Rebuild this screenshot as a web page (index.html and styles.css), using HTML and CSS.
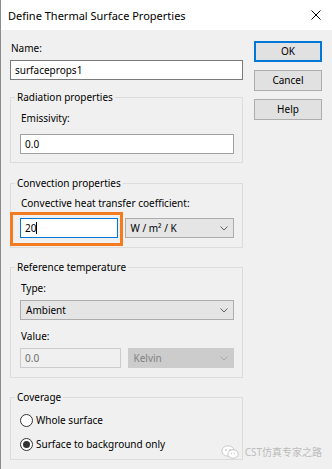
FILE: index.html
```html
<!DOCTYPE html>
<html lang="en">
<head>
    <meta charset="UTF-8">
    <meta name="viewport" content="width=device-width, initial-scale=1.0">
    <title>Define Thermal Surface Properties</title>
    <link rel="stylesheet" href="styles.css">
</head>
<body>

<div class="window">
    <div class="titlebar">
        <span class="title">Define Thermal Surface Properties</span>
        <svg class="close" width="10" height="10" viewBox="0 0 10 10">
            <path d="M0.5 0.5 L9.5 9.5 M9.5 0.5 L0.5 9.5" stroke="#000" stroke-width="1" fill="none"/>
        </svg>
    </div>

    <div class="content">
        <div class="main">
            <div class="label name-label">Name:</div>
            <div class="field field-dark">surfaceprops1</div>

            <fieldset class="group group-radiation">
                <legend>Radiation properties</legend>
                <div class="label">Emissivity:</div>
                <div class="field field-gap">0.0</div>
            </fieldset>

            <fieldset class="group group-convection">
                <legend>Convection properties</legend>
                <div class="label">Convective heat transfer coefficient:</div>
                <div class="row row-convection">
                    <div class="highlight">
                        <div class="field field-focus">20<span class="caret"></span></div>
                    </div>
                    <div class="select">
                        <span>W / m² / K</span>
                        <svg width="8" height="5" viewBox="0 0 8 5"><path d="M0.5 0.5 L4 4 L7.5 0.5" stroke="#606060" fill="none"/></svg>
                    </div>
                </div>
            </fieldset>

            <fieldset class="group group-reference">
                <legend>Reference temperature</legend>
                <div class="label">Type:</div>
                <div class="select select-wide">
                    <span>Ambient</span>
                    <svg width="8" height="5" viewBox="0 0 8 5"><path d="M0.5 0.5 L4 4 L7.5 0.5" stroke="#606060" fill="none"/></svg>
                </div>
                <div class="label value-label">Value:</div>
                <div class="row row-value">
                    <div class="field field-disabled">0.0</div>
                    <div class="select select-disabled">
                        <span>Kelvin</span>
                        <svg width="8" height="5" viewBox="0 0 8 5"><path d="M0.5 0.5 L4 4 L7.5 0.5" stroke="#a8a8a8" fill="none"/></svg>
                    </div>
                </div>
            </fieldset>

            <fieldset class="group group-coverage">
                <legend>Coverage</legend>
                <div class="radio-row">
                    <span class="radio"></span>
                    <span>Whole surface</span>
                </div>
                <div class="radio-row">
                    <span class="radio checked"><span class="dot"></span></span>
                    <span>Surface to background only</span>
                </div>
            </fieldset>
        </div>

        <div class="buttons">
            <div class="button default">OK</div>
            <div class="button">Cancel</div>
            <div class="button">Help</div>
        </div>
    </div>

    <div class="watermark">
        <svg width="18" height="14" viewBox="0 0 18 14">
            <ellipse cx="7" cy="6" rx="6.2" ry="5.2" fill="#fff" stroke="#c8c8c8"/>
            <ellipse cx="12" cy="9" rx="5.2" ry="4.3" fill="#fff" stroke="#c8c8c8"/>
            <circle cx="5" cy="5" r="0.9" fill="#c8c8c8"/>
            <circle cx="9" cy="5" r="0.9" fill="#c8c8c8"/>
            <circle cx="10.5" cy="8.5" r="0.7" fill="#c8c8c8"/>
            <circle cx="13.5" cy="8.5" r="0.7" fill="#c8c8c8"/>
        </svg>
        <span>CST仿真专家之路</span>
    </div>
</div>

</body>
</html>
```

FILE: styles.css
```css
* {
    box-sizing: border-box;
}

body {
    margin: 0;
    font-family: "Noto Sans", "Noto Sans CJK SC", sans-serif;
    font-size: 10px;
    color: #000;
}

.window {
    position: relative;
    width: 332px;
    height: 469px;
    background-color: #f0f0f0;
    border-left: 1px solid #8c8c8c;
    overflow: hidden;
}

.titlebar {
    height: 30px;
    background-color: #fff;
    display: flex;
    align-items: center;
    justify-content: space-between;
    padding: 0 11px 0 7px;
}

.title {
    font-size: 11px;
}

.content {
    display: flex;
    gap: 11px;
    padding-left: 9px;
}

.main {
    width: 233px;
}

.label {
    line-height: 16px;
    padding-left: 1px;
}

.name-label {
    margin-top: 10px;
    margin-bottom: 4px;
}

.field {
    height: 20px;
    line-height: 18px;
    padding-left: 4px;
    background-color: #fff;
    border: 1px solid #a0a0a0;
}

.field-dark {
    border-color: #7a7a7a;
}

.field-gap {
    margin-top: 8px;
}

.field-focus {
    border-color: #0078d7;
}

.field-disabled {
    background-color: #f0f0f0;
    border-color: #cccccc;
    color: #6d6d6d;
}

.caret {
    display: inline-block;
    width: 1px;
    height: 12px;
    background-color: #000;
    vertical-align: -2px;
}

.group {
    margin: 0;
    min-width: 0;
    border: 1px solid #dcdcdc;
}

.group legend {
    margin-left: -5px;
    padding: 0 2px;
    line-height: 16px;
}

.group-radiation {
    margin-top: 9px;
    padding: 5px 8px 8px 9px;
}

.group-convection {
    margin-top: 12px;
    padding: 4px 8px 9px 9px;
}

.group-reference {
    margin-top: 11px;
    padding: 5px 8px 9px 9px;
}

.group-coverage {
    margin-top: 11px;
    padding: 7px 8px 7px 9px;
    display: flex;
    flex-direction: column;
    gap: 8px;
}

.row {
    display: flex;
    gap: 7px;
}

.row > * {
    flex: 1;
}

.row-convection {
    margin-top: 7px;
}

.row-value {
    margin-top: 4px;
}

.highlight {
    position: relative;
}

.highlight::after {
    content: "";
    position: absolute;
    top: -6px;
    right: -5px;
    bottom: -8px;
    left: -10px;
    border: 3px solid #f47b20;
}

.select {
    height: 20px;
    display: flex;
    align-items: center;
    justify-content: space-between;
    padding: 0 5px 0 5px;
    background-color: #e5e5e5;
    border: 1px solid #adadad;
}

.select-wide {
    margin-top: 4px;
}

.select-disabled {
    background-color: #cccccc;
    border-color: #cccccc;
    color: #838383;
}

.value-label {
    margin-top: 8px;
}

.radio-row {
    display: flex;
    align-items: center;
    gap: 3px;
    height: 16px;
}

.radio {
    width: 13px;
    height: 13px;
    border: 1px solid #333;
    border-radius: 50%;
    background-color: #fff;
    display: flex;
    align-items: center;
    justify-content: center;
}

.dot {
    width: 7px;
    height: 7px;
    border-radius: 50%;
    background-color: #333;
}

.buttons {
    width: 68px;
    margin-top: 11px;
    display: flex;
    flex-direction: column;
    gap: 8px;
}

.button {
    height: 21px;
    line-height: 19px;
    text-align: center;
    background-color: #e1e1e1;
    border: 1px solid #adadad;
}

.button.default {
    border: 2px solid #0078d7;
    line-height: 17px;
}

.watermark {
    position: absolute;
    right: 10px;
    bottom: 10px;
    display: flex;
    align-items: center;
    gap: 6px;
    color: #bcbcbc;
    font-size: 10px;
}
```
